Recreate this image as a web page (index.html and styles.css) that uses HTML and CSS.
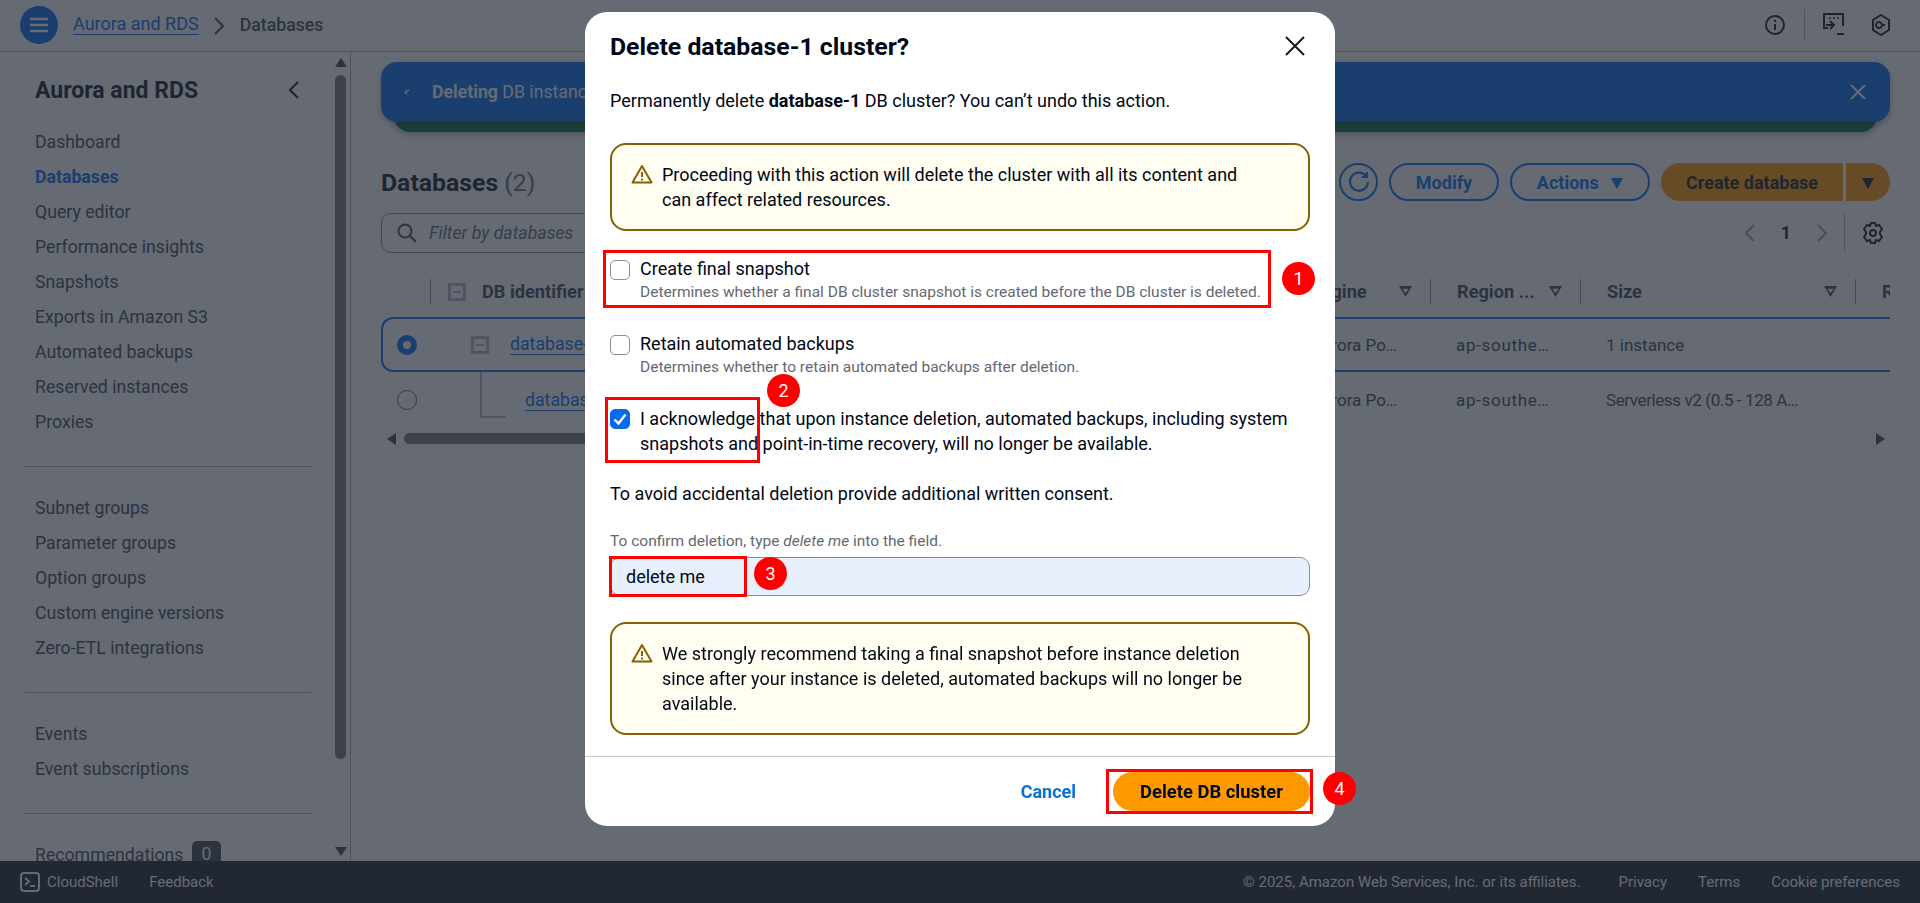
FILE: index.html
```html
<!DOCTYPE html>
<html lang="en">
<head>
  <meta charset="UTF-8">
  <meta name="viewport" content="width=device-width, initial-scale=1.0">
  <title>Databases - Aurora and RDS</title>
  <link rel="stylesheet" href="styles.css">
</head>
<body>
  <header class="topbar">
    <div class="menu-btn">
      <svg width="18" height="16" viewBox="0 0 18 16"><path d="M0 2h18M0 8h18M0 14h18" stroke="#fff" stroke-width="2.4"/></svg>
    </div>
    <a class="crumb-link">Aurora and RDS</a>
    <svg class="crumb-sep" width="10" height="18" viewBox="0 0 10 18"><path d="M1 1l8 8-8 8" fill="none" stroke="#414750" stroke-width="2"/></svg>
    <span class="crumb-current">Databases</span>
    <div class="top-icons">
      <svg width="22" height="22" viewBox="0 0 22 22" fill="none" stroke="#16191f" stroke-width="2"><circle cx="11" cy="11" r="9"/><path d="M11 10v6M11 6v2"/></svg>
      <span class="top-sep"></span>
      <svg class="ic-term" width="22" height="24" viewBox="0 0 22 24" fill="none" stroke="#16191f" stroke-width="2"><path d="M5 15H1V1h19v12"/><path d="M6 5h2M10 5h2M14 5h2" stroke-width="1.6"/><path d="M3 12h8M7 8l4 4-4 4"/><path d="M14 21h7"/></svg>
      <svg class="ic-hex" width="20" height="24" viewBox="0 0 20 24" fill="none" stroke="#16191f" stroke-width="2"><path d="M10 2l8 5v10l-8 5-8-5V7z"/><path d="M14 12h-3a3 3 0 1 1 0-.1"/></svg>
    </div>
  </header>

  <div class="content">
    <aside class="sidebar">
      <div class="side-body">
        <div class="side-title">
          <span>Aurora and RDS</span>
          <svg width="10" height="18" viewBox="0 0 10 18"><path d="M9 1L1 9l8 8" fill="none" stroke="#16191f" stroke-width="2"/></svg>
        </div>
        <nav class="side-nav">
          <a>Dashboard</a>
          <a class="active">Databases</a>
          <a>Query editor</a>
          <a>Performance insights</a>
          <a>Snapshots</a>
          <a>Exports in Amazon S3</a>
          <a>Automated backups</a>
          <a>Reserved instances</a>
          <a>Proxies</a>
        </nav>
        <div class="side-divider"></div>
        <nav class="side-nav">
          <a>Subnet groups</a>
          <a>Parameter groups</a>
          <a>Option groups</a>
          <a>Custom engine versions</a>
          <a>Zero-ETL integrations</a>
        </nav>
        <div class="side-divider"></div>
        <nav class="side-nav">
          <a>Events</a>
          <a>Event subscriptions</a>
        </nav>
        <div class="side-divider"></div>
        <nav class="side-nav">
          <a>Recommendations <span class="badge-count">0</span></a>
        </nav>
      </div>
      <div class="side-scroll">
        <span class="tri-up"></span>
        <span class="side-thumb"></span>
        <span class="tri-down"></span>
      </div>
    </aside>

    <main class="main">
      <div class="flash">
        <svg class="flash-spin" width="6" height="6" viewBox="0 0 6 6"><path d="M5 1L1 3l2 2" fill="none" stroke="#fff" stroke-width="1.5"/></svg>
        <span class="flash-text"><b>Deleting</b> DB instance</span>
        <svg width="16" height="16" viewBox="0 0 16 16"><path d="M1 1l14 14M15 1L1 15" stroke="#fff" stroke-width="2"/></svg>
      </div>
      <div class="flash-under"></div>

      <div class="title-row">
        <h2>Databases <span>(2)</span></h2>
        <button class="btn btn-round">
          <svg width="22" height="22" viewBox="0 0 22 22" fill="none" stroke="#056bee" stroke-width="2.2"><path d="M18 5a9 9 0 1 0 2 6"/><path d="M19 1v5h-5"/></svg>
        </button>
        <button class="btn btn-modify">Modify</button>
        <button class="btn btn-actions">Actions <i class="caret"></i></button>
        <div class="split">
          <button class="btn-primary">Create database</button>
          <button class="btn-primary btn-caret"><i class="caret dark"></i></button>
        </div>
      </div>

      <div class="filter-row">
        <div class="filter">
          <svg width="20" height="20" viewBox="0 0 20 20" fill="none" stroke="#414750" stroke-width="2"><circle cx="8" cy="8" r="6.5"/><path d="M13 13l6 6"/></svg>
          <em>Filter by databases</em>
        </div>
        <div class="pager">
          <svg width="10" height="18" viewBox="0 0 10 18"><path d="M9 1L1 9l8 8" fill="none" stroke="#9ba0a8" stroke-width="2"/></svg>
          <b>1</b>
          <svg width="10" height="18" viewBox="0 0 10 18"><path d="M1 1l8 8-8 8" fill="none" stroke="#9ba0a8" stroke-width="2"/></svg>
          <span class="pager-sep"></span>
          <svg width="20" height="22" viewBox="0 0 20 22" fill="none" stroke="#16191f" stroke-width="2"><path d="M8 1h4l1 3 3-1 3 4-2 3 0 2 2 3-3 4-3-1-1 3H8l-1-3-3 1-3-4 2-3v-2L1 7l3-4 3 1z"/><circle cx="10" cy="11" r="3"/></svg>
        </div>
      </div>

      <div class="table">
        <div class="t-row t-head">
          <div></div>
          <div class="th th-id"><i class="tree-box"></i>DB identifier</div>
          <div class="th no-line">Engine<i class="tri-filter"></i></div>
          <div class="th">Region ...<i class="tri-filter"></i></div>
          <div class="th">Size<i class="tri-filter"></i></div>
          <div class="th">R</div>
        </div>
        <div class="t-row t-selected">
          <div class="td-radio"><i class="radio on"></i></div>
          <div class="td td-id"><i class="tree-box"></i><a>database-1</a></div>
          <div class="td">Aurora Po…</div>
          <div class="td td-region">ap-southe…</div>
          <div class="td">1 instance</div>
          <div></div>
        </div>
        <div class="t-row t-child">
          <div class="td-radio"><i class="radio"></i></div>
          <div class="td td-id"><i class="tree-line"></i><a>database-1-instance-1</a></div>
          <div class="td">Aurora Po…</div>
          <div class="td td-region">ap-southe…</div>
          <div class="td td-size">Serverless v2 (0.5 - 128 A…</div>
          <div></div>
        </div>
      </div>

      <div class="h-scroll">
        <span class="tri-left"></span>
        <span class="h-thumb"></span>
        <span class="tri-right"></span>
      </div>
    </main>
  </div>

  <footer class="footer">
    <svg width="20" height="20" viewBox="0 0 20 20" fill="none" stroke="#fff" stroke-width="2"><rect x="1" y="1" width="18" height="18" rx="3"/><path d="M5 6l4 3.5L5 13M10 14h5"/></svg>
    <a class="foot-shell">CloudShell</a>
    <a>Feedback</a>
    <span class="foot-copy">© 2025, Amazon Web Services, Inc. or its affiliates.</span>
    <a class="foot-link">Privacy</a>
    <a class="foot-link">Terms</a>
    <a class="foot-link">Cookie preferences</a>
  </footer>

  <div class="overlay"></div>

  <section class="modal">
    <div class="modal-body">
      <div class="modal-head">
        <h1>Delete database-1 cluster?</h1>
        <svg width="22" height="22" viewBox="0 0 22 22"><path d="M2 2l18 18M20 2L2 20" stroke="#16191f" stroke-width="2"/></svg>
      </div>
      <p class="desc">Permanently delete <b>database-1</b> DB cluster? You can’t undo this action.</p>

      <div class="warn warn-first">
        <svg width="22" height="20" viewBox="0 0 22 20" fill="none" stroke="#8a5f00" stroke-width="2" stroke-linejoin="round"><path d="M11 2l9.5 16.5h-19z"/><path d="M11 8v5M11 14.5v2"/></svg>
        <p>Proceeding with this action will delete the cluster with all its content and can affect related resources.</p>
      </div>

      <label class="check check-final">
        <i class="box"></i>
        <span>Create final snapshot<small>Determines whether a final DB cluster snapshot is created before the DB cluster is deleted.</small></span>
      </label>
      <label class="check check-retain">
        <i class="box"></i>
        <span>Retain automated backups<small>Determines whether to retain automated backups after deletion.</small></span>
      </label>
      <label class="check check-ack">
        <i class="box checked">
          <svg width="14" height="12" viewBox="0 0 14 12"><path d="M1.5 6.5l4 4 7-9" fill="none" stroke="#fff" stroke-width="2.4"/></svg>
        </i>
        <span>I acknowledge that upon instance deletion, automated backups, including system snapshots and point-in-time recovery, will no longer be available.</span>
      </label>

      <p class="consent">To avoid accidental deletion provide additional written consent.</p>
      <p class="confirm-label">To confirm deletion, type <em>delete me</em> into the field.</p>
      <div class="confirm-input">delete me</div>

      <div class="warn warn-second">
        <svg width="22" height="20" viewBox="0 0 22 20" fill="none" stroke="#8a5f00" stroke-width="2" stroke-linejoin="round"><path d="M11 2l9.5 16.5h-19z"/><path d="M11 8v5M11 14.5v2"/></svg>
        <p>We strongly recommend taking a final snapshot before instance deletion since after your instance is deleted, automated backups will no longer be available.</p>
      </div>
    </div>

    <div class="modal-foot">
      <a class="cancel">Cancel</a>
      <button class="btn-delete">Delete DB cluster</button>
    </div>

    <div class="mark mark-1"></div>
    <div class="mark mark-2"></div>
    <div class="mark mark-3"></div>
    <div class="mark mark-4"></div>
    <span class="step step-1">1</span>
    <span class="step step-2">2</span>
    <span class="step step-3">3</span>
    <span class="step step-4">4</span>
  </section>
</body>
</html>
```

FILE: styles.css
```css
* {
  box-sizing: border-box;
}
body {
  margin: 0;
  height: 100vh;
  overflow: hidden;
  display: flex;
  flex-direction: column;
  background: white;
  color: #16191f;
  font-family: Roboto, "Noto Sans", sans-serif;
  font-size: 17.7px;
}
p, h1, h2 {
  margin: 0;
}
i {
  font-style: normal;
}

/* top bar */
.topbar {
  height: 52px;
  flex: none;
  display: flex;
  align-items: center;
  padding: 0 29px 2px 20px;
  border-bottom: 1px solid #aab0b8;
}
.menu-btn {
  width: 38px;
  height: 38px;
  border-radius: 50%;
  background: #056bee;
  display: flex;
  align-items: center;
  justify-content: center;
}
.crumb-link {
  margin-left: 15px;
  color: #056bee;
  border-bottom: 1px solid #056bee;
  line-height: 20px;
  font-size: 18px;
}
.crumb-sep {
  margin: 2px 16px 0 15px;
}
.crumb-current {
  color: #414750;
  font-weight: 500;
}
.top-icons {
  margin-left: auto;
  display: flex;
  align-items: center;
}
.top-sep {
  width: 1px;
  height: 31px;
  background: #aab0b8;
  margin: 0 18px;
}
.ic-hex {
  margin-left: 26px;
}

/* sidebar */
.content {
  flex: 1;
  display: flex;
  min-height: 0;
}
.sidebar {
  width: 351px;
  flex: none;
  display: flex;
  border-right: 1px solid #aab0b8;
  overflow: hidden;
}
.side-body {
  width: 335px;
  flex: none;
  padding: 20px 0 0 25px;
}
.side-title {
  height: 36px;
  padding: 0 36px 0 10px;
  display: flex;
  align-items: center;
  justify-content: space-between;
  font-size: 23px;
  font-weight: 700;
}
.side-nav {
  padding-left: 10px;
}
.side-title + .side-nav {
  margin-top: 16.5px;
}
.side-nav a {
  display: block;
  height: 35px;
  line-height: 35px;
  color: #414750;
}
.side-nav a.active {
  color: #056bee;
  font-weight: 700;
}
.side-divider {
  width: 286px;
  height: 1px;
  background: #aab0b8;
  margin: 26px 0 24px;
}
.badge-count {
  display: inline-block;
  width: 29px;
  height: 24px;
  margin-left: 4px;
  line-height: 26px;
  text-align: center;
  border-radius: 5px;
  background: #414750;
  color: white;
  vertical-align: 1px;
}
.side-scroll {
  width: 11px;
  flex: none;
  display: flex;
  flex-direction: column;
  align-items: center;
  padding-top: 6px;
}
.side-thumb {
  width: 11px;
  height: 684px;
  margin: 8px 0 88px;
  border-radius: 6px;
  background: #1a1a1f;
  opacity: 0.6;
}
.tri-up, .tri-down, .tri-left, .tri-right {
  width: 0;
  height: 0;
  display: block;
  flex: none;
  border-style: solid;
  border-color: transparent;
}
.tri-up {
  border-width: 0 6px 9px;
  border-bottom-color: #414750;
}
.tri-down {
  border-width: 9px 6px 0;
  border-top-color: #414750;
}
.tri-left {
  border-width: 6px 9px 6px 0;
  border-right-color: #414750;
}
.tri-right {
  border-width: 6px 0 6px 9px;
  border-left-color: #414750;
}

/* main */
.main {
  flex: 1;
  min-width: 0;
  padding: 10px 30px 0;
  overflow: hidden;
}
.flash {
  position: relative;
  z-index: 1;
  height: 60px;
  display: flex;
  align-items: center;
  padding: 0 24px 0 23px;
  border-radius: 16px;
  background: #056bee;
  color: white;
  box-shadow: 0 3px 6px rgba(0, 0, 0, 0.3);
}
.flash-text {
  margin-left: 22px;
  flex: 1;
}
.flash-under {
  height: 30px;
  margin: -20px 13px 0;
  border-radius: 0 0 16px 16px;
  background: #05713b;
  box-shadow: 0 3px 6px rgba(0, 0, 0, 0.3);
}
.title-row {
  margin-top: 31px;
  height: 38px;
  display: flex;
  align-items: center;
}
.title-row h2 {
  margin-right: auto;
  font-size: 24.8px;
  font-weight: 700;
}
.title-row h2 span {
  font-weight: 400;
  color: #5f6b7a;
}
.btn {
  height: 38px;
  margin-right: 11px;
  padding: 0;
  border: 2px solid #056bee;
  border-radius: 19px;
  background: white;
  color: #056bee;
  font: 700 18px Roboto, sans-serif;
}
.btn-round {
  width: 39px;
  display: flex;
  align-items: center;
  justify-content: center;
}
.btn-modify {
  width: 110px;
}
.btn-actions {
  width: 140px;
}
.caret {
  display: inline-block;
  width: 0;
  height: 0;
  margin-left: 8px;
  border-style: solid;
  border-width: 11px 6.5px 0;
  border-color: #056bee transparent transparent;
}
.caret.dark {
  margin: 0;
  border-top-color: #16191f;
}
.split {
  display: flex;
  gap: 3px;
}
.btn-primary {
  width: 182px;
  height: 38px;
  border: none;
  border-radius: 19px 0 0 19px;
  background: #ff9900;
  color: #16191f;
  font: 700 18px Roboto, sans-serif;
}
.btn-caret {
  width: 44px;
  border-radius: 0 19px 19px 0;
}
.filter-row {
  margin-top: 12px;
  height: 40px;
  display: flex;
  align-items: center;
  justify-content: space-between;
}
.filter {
  width: 500px;
  height: 40px;
  display: flex;
  align-items: center;
  gap: 12px;
  padding-left: 15px;
  border: 1px solid #8c8c94;
  border-radius: 10px;
  color: #5f6b7a;
}
.pager {
  display: flex;
  align-items: center;
  padding-right: 7px;
}
.pager b {
  margin: 0 26px;
  font-weight: 700;
}
.pager-sep {
  width: 1px;
  height: 38px;
  margin: 0 18px 0 17px;
  background: #aab0b8;
}

/* table */
.table {
  margin-top: 17px;
  overflow: hidden;
}
.t-row {
  display: grid;
  grid-template-columns: 49px 855px 145px 150px 275px 35px;
  align-items: center;
}
.t-head {
  height: 47px;
  padding-bottom: 4px;
  font-size: 18.2px;
  font-weight: 700;
  color: #414750;
}
.th {
  display: flex;
  align-items: center;
  height: 25px;
  padding: 0 18px 0 26px;
  border-left: 1px solid #8c8c94;
  white-space: nowrap;
}
.th.no-line {
  border-left: none;
}
.th-id {
  padding-left: 17px;
  gap: 16px;
}
.tri-filter {
  margin-left: auto;
  width: 13px;
  height: 11px;
  flex: none;
  background: #414750;
  clip-path: polygon(0 0, 100% 0, 50% 100%, 0 0, 25% 25%, 50% 65%, 75% 25%, 25% 25%);
}
.tree-box {
  width: 18px;
  height: 18px;
  flex: none;
  border: 3px solid #b4b8be;
  background: linear-gradient(#b4b8be, #b4b8be) center / 8px 2px no-repeat;
}
.t-selected {
  height: 55px;
  grid-template-columns: 47px 855px 145px 150px 275px 35px;
  border: 2px solid #056bee;
  border-right: none;
  border-radius: 12px 0 0 12px;
}
.t-child {
  height: 56px;
}
.td {
  padding-left: 26px;
  font-size: 17px;
  color: #414750;
  white-space: nowrap;
}
.td-region {
  letter-spacing: 0.7px;
}
.td-size {
  letter-spacing: -0.4px;
}
.td-radio {
  padding-left: 16px;
}
.t-selected .td-radio {
  padding-left: 14px;
}
.radio {
  display: block;
  width: 20px;
  height: 20px;
  border: 1px solid #5f6b7a;
  border-radius: 50%;
}
.radio.on {
  border: 6px solid #056bee;
}
.td-id {
  position: relative;
  display: flex;
  align-items: center;
  font-size: 17.7px;
}
.t-selected .td-id {
  padding-left: 41px;
  gap: 21px;
}
.t-child .td-id {
  padding-left: 95px;
}
.td-id a {
  color: #056bee;
  border-bottom: 1px solid #056bee;
  line-height: 20px;
}
.tree-line {
  position: absolute;
  left: 50px;
  top: -18px;
  width: 26px;
  height: 46px;
  border-left: 2px solid #b4b8be;
  border-bottom: 2px solid #b4b8be;
}
.h-scroll {
  margin-top: 5px;
  height: 11px;
  display: flex;
  align-items: center;
  padding: 0 5px 0 6px;
}
.h-thumb {
  width: 700px;
  height: 11px;
  margin: 0 auto 0 8px;
  border-radius: 6px;
  background: #1a1a1f;
  opacity: 0.6;
}

/* footer */
.footer {
  height: 42px;
  flex: none;
  display: flex;
  align-items: center;
  padding: 0 20px;
  background: #1c1e2a;
  color: white;
  font-size: 15px;
}
.foot-shell {
  margin: 0 31px 0 7px;
}
.foot-copy {
  margin-left: auto;
  margin-right: 7px;
}
.foot-link {
  margin-left: 31px;
}

.overlay {
  position: fixed;
  inset: 0;
  z-index: 10;
  background: rgba(35, 43, 55, 0.7);
}

/* modal */
.modal {
  position: absolute;
  z-index: 11;
  left: 585px;
  top: 12px;
  width: 750px;
  height: 814px;
  display: flex;
  flex-direction: column;
  border-radius: 22px;
  background: white;
  color: #000716;
  font-size: 18px;
}
.modal-body {
  flex: 1;
  padding: 19px 25px 0;
}
.modal-head {
  height: 30px;
  display: flex;
  align-items: center;
  justify-content: space-between;
  padding-right: 4px;
}
.modal-head h1 {
  font-size: 24.8px;
  font-weight: 700;
}
.desc {
  margin-top: 27px;
  line-height: 25px;
}
.warn {
  display: flex;
  align-items: flex-start;
  gap: 9px;
  padding: 17px 40px 17px 19px;
  border: 2px solid #8a5f00;
  border-radius: 16px;
  background: #fffef0;
  line-height: 25px;
}
.warn svg {
  flex: none;
  margin-top: 2px;
}
.warn-first {
  margin-top: 30px;
}
.warn-second {
  margin-top: 26px;
}
.check {
  display: flex;
  gap: 10px;
  line-height: 24px;
}
.check small {
  display: block;
  font-size: 15.5px;
  line-height: 22px;
  color: #656871;
}
.check-final {
  margin-top: 26px;
}
.check-retain {
  margin-top: 29px;
}
.check-ack {
  margin-top: 28px;
  line-height: 25px;
  padding-right: 10px;
}
.box {
  width: 20px;
  height: 20px;
  flex: none;
  margin-top: 3px;
  border: 1px solid #8c8c94;
  border-radius: 5px;
  background: white;
  display: flex;
  align-items: center;
  justify-content: center;
}
.box.checked {
  background: #056bee;
  border-color: #056bee;
}
.consent {
  margin-top: 25px;
  line-height: 25px;
}
.confirm-label {
  margin-top: 24px;
  font-size: 15.5px;
  line-height: 22px;
  color: #656871;
}
.confirm-input {
  margin-top: 5px;
  height: 39px;
  line-height: 37px;
  padding-left: 15px;
  border: 1px solid #8c8c94;
  border-radius: 10px;
  background: #e8f0fe;
}
.modal-foot {
  height: 70px;
  flex: none;
  display: flex;
  align-items: flex-start;
  justify-content: flex-end;
  gap: 37px;
  padding: 15px 25px 0 0;
  border-top: 1px solid #c6c6cd;
}
.cancel {
  line-height: 39px;
  font-weight: 700;
  color: #0972d3;
}
.btn-delete {
  width: 197px;
  height: 39px;
  border: none;
  border-radius: 20px;
  background: #ff9900;
  color: #000716;
  font: 700 18.4px Roboto, sans-serif;
}

/* red annotations drawn on top of the dialog */
.mark {
  position: absolute;
  border: 3px solid #ff0000;
}
.mark-1 { left: 18px; top: 238px; width: 668px; height: 58px; }
.mark-2 { left: 20px; top: 385px; width: 155px; height: 66px; }
.mark-3 { left: 24px; top: 544px; width: 138px; height: 41px; }
.mark-4 { left: 521px; top: 757px; width: 207px; height: 45px; }
.step {
  position: absolute;
  width: 33px;
  height: 33px;
  line-height: 33px;
  border-radius: 50%;
  background: #ff0000;
  color: white;
  text-align: center;
  font-size: 18px;
}
.step-1 { left: 697px; top: 250px; }
.step-2 { left: 182px; top: 362px; }
.step-3 { left: 169px; top: 545px; }
.step-4 { left: 738px; top: 760px; }
```
